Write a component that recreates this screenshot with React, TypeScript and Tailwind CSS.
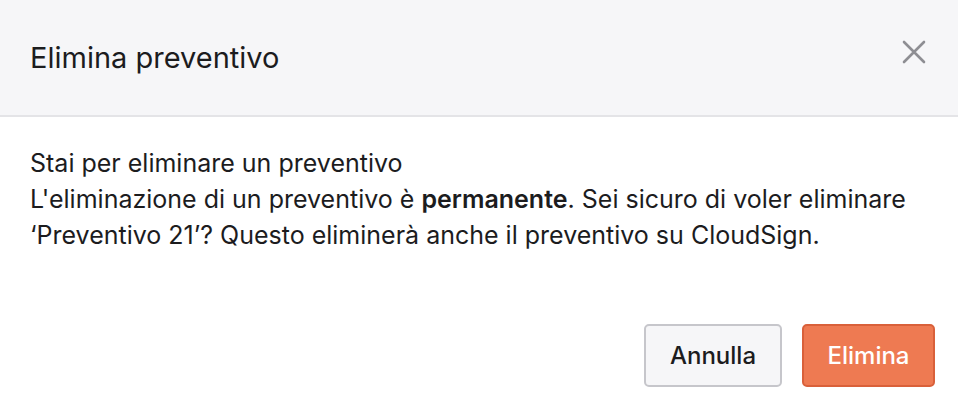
function App() {
  return (
    <div
      className="w-[958px] h-[420px] bg-white text-[#1c1c1e] flex flex-col"
      style={{ fontFamily: "Inter, 'Noto Sans', sans-serif" }}
    >
      {/* Header */}
      <div className="h-[117px] shrink-0 bg-[#f6f6f8] border-b-2 border-[#e4e4e7] flex items-center justify-between pl-[30px] pr-[32px]">
        <h1 className="text-[29px] font-normal">Elimina preventivo</h1>
        <button className="text-[#8e8e93] mb-[12px]">
          <svg width="24" height="24" viewBox="0 0 24 24" fill="none" stroke="currentColor" strokeWidth="2.6" strokeLinecap="round">
            <path d="M2 2L22 22M22 2L2 22" />
          </svg>
        </button>
      </div>

      {/* Body */}
      <div className="px-[30px] pt-[28px] text-[25px] leading-[36px]">
        <p>Stai per eliminare un preventivo</p>
        <p>
          L'eliminazione di un preventivo è <b className="font-semibold">permanente</b>. Sei sicuro di voler eliminare
          <br />
          ‘Preventivo 21’? Questo eliminerà anche il preventivo su CloudSign.
        </p>
      </div>

      {/* Footer */}
      <div className="flex justify-end gap-[20px] pr-[23px] mt-auto mb-[33px]">
        <button className="h-[63px] w-[138px] rounded-[5px] border-2 border-[#c6c6cb] bg-[#f6f6f8] text-[24px] font-medium">
          Annulla
        </button>
        <button className="h-[63px] w-[133px] rounded-[5px] border-2 border-[#d9603a] bg-[#ee7a52] text-[24px] font-medium text-white">
          Elimina
        </button>
      </div>
    </div>
  );
}

export default App;
